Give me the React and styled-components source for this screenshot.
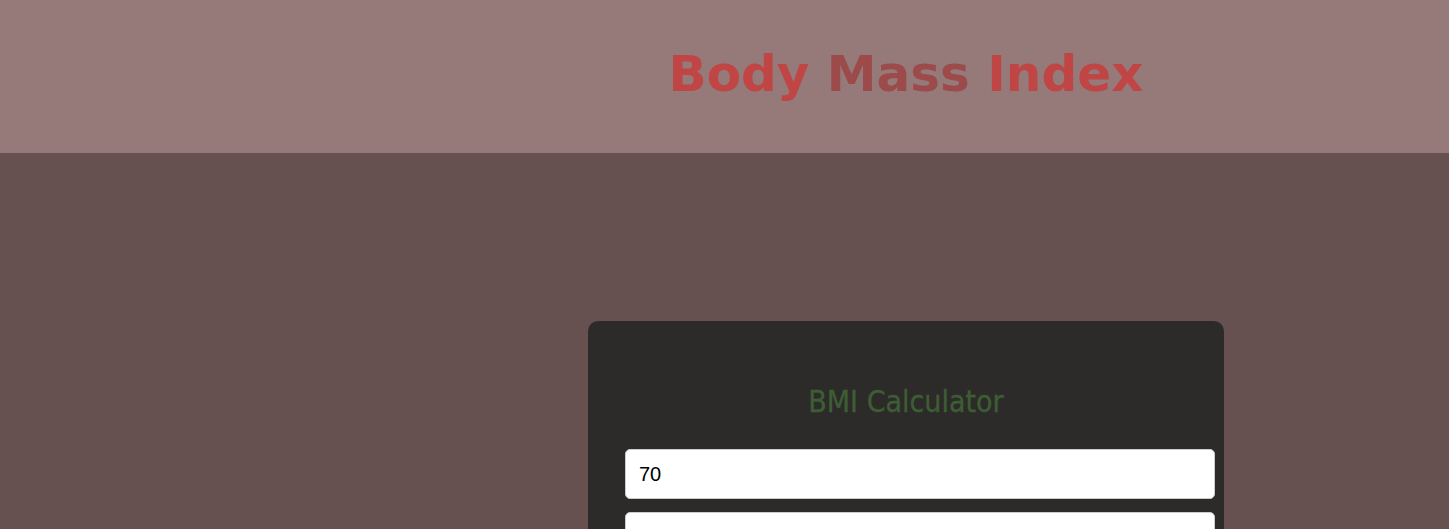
import React from "react";
import styled, { createGlobalStyle } from "styled-components";

const Global = createGlobalStyle`
  html, body { margin: 0; padding: 0; }
  body { background: #675050; font-family: "Liberation Sans", Arial, sans-serif; }
`;

const Page = styled.div`
  min-height: 529px;
  background: #675050;
`;

const Header = styled.header`
  height: 153px;
  box-sizing: border-box;
  background: #967a7a;
  display: flex;
  align-items: center;
  justify-content: center;
  padding: 0 0 6px 363px;
`;

const Title = styled.h1`
  margin: 0;
  font-family: "DejaVu Sans", Verdana, sans-serif;
  font-weight: bold;
  font-size: 50px;
  color: #c04545;
`;

const Dark = styled.span`
  color: #9c4a4a;
`;

const Main = styled.main`
  display: flex;
  justify-content: center;
  padding: 168px 0 0 363px;
`;

const Card = styled.section`
  width: 562px;
  background: #2d2b29;
  border-radius: 10px;
  padding: 63px 37px 40px;
`;

const CardTitle = styled.h2`
  margin: 0 0 30px;
  text-align: center;
  font-family: "DejaVu Sans Condensed", "DejaVu Sans", sans-serif;
  font-weight: normal;
  font-size: 30px;
  color: #3d5e34;
  -webkit-text-stroke: 0.3px #3d5e34;
`;

const Input = styled.input`
  display: block;
  width: 100%;
  height: 48px;
  padding: 0 13px;
  margin: 0 0 13px;
  border: 1px solid #ccc;
  border-radius: 5px;
  background: #fff;
  font-family: "Liberation Sans", Arial, sans-serif;
  font-size: 20px;
  color: #000;
  outline: none;
`;

export default function App() {
  return (
    <Page>
      <Global />
      <Header>
        <Title>
          Body <Dark>Mass</Dark> Index
        </Title>
      </Header>
      <Main>
        <Card>
          <CardTitle>BMI Calculator</CardTitle>
          <Input type="number" defaultValue="70" />
          <Input type="number" defaultValue="180" />
          <Input type="number" defaultValue="25" />
        </Card>
      </Main>
    </Page>
  );
}
